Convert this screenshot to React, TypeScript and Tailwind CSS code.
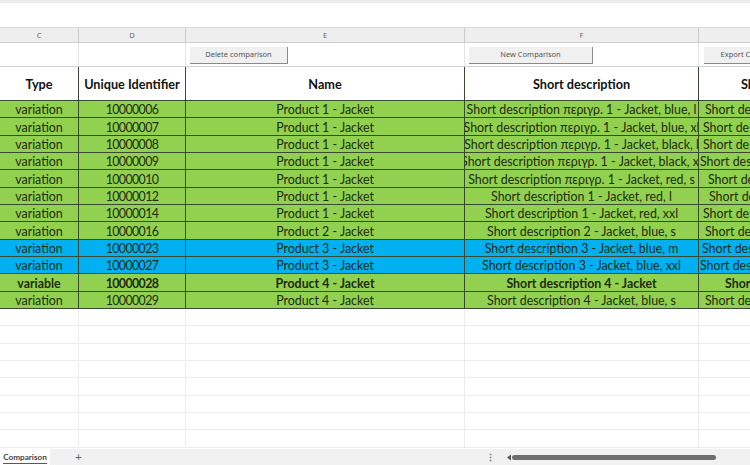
const rows: [string, string, string, string, string, string, string][] = [
  ["variation", "10000006", "Product 1 - Jacket", "Short description περιγρ. 1 - Jacket, blue, l", "Short description 1", "g", "pl-[6px]"],
  ["variation", "10000007", "Product 1 - Jacket", "Short description περιγρ. 1 - Jacket, blue, xl", "Short description 1", "g", "pl-[4px]"],
  ["variation", "10000008", "Product 1 - Jacket", "Short description περιγρ. 1 - Jacket, black, l", "Short description 1", "g", "pl-[4px]"],
  ["variation", "10000009", "Product 1 - Jacket", "Short description περιγρ. 1 - Jacket, black, xl", "Short description 1", "g", "pl-[1px]"],
  ["variation", "10000010", "Product 1 - Jacket", "Short description περιγρ. 1 - Jacket, red, s", "Short description 1", "g", "pl-[9px]"],
  ["variation", "10000012", "Product 1 - Jacket", "Short description 1 - Jacket, red, l", "Short description 1", "g", "pl-[10px]"],
  ["variation", "10000014", "Product 1 - Jacket", "Short description 1 - Jacket, red, xxl", "Short description 1", "g", "pl-[4px]"],
  ["variation", "10000016", "Product 2 - Jacket", "Short description 2 - Jacket, blue, s", "Short description 2", "g", "pl-[6px]"],
  ["variation", "10000023", "Product 3 - Jacket", "Short description 3 - Jacket, blue, m", "Short description 3", "b", "pl-[3px]"],
  ["variation", "10000027", "Product 3 - Jacket", "Short description 3 - Jacket, blue, xxl", "Short description 3", "b", "pl-[1px]"],
  ["variable", "10000028", "Product 4 - Jacket", "Short description 4 - Jacket", "Short description 4", "v", "pl-[26px]"],
  ["variation", "10000029", "Product 4 - Jacket", "Short description 4 - Jacket, blue, s", "Short description 4", "g", "pl-[6px]"],
];

const cols = "grid grid-cols-[79px_107px_279px_234px_235px]";
const font = { fontFamily: "Lato, 'Noto Sans', sans-serif" };
const uiFont = { fontFamily: "'Noto Sans', sans-serif" };

function Cell({ children, cls = "" }: { children?: React.ReactNode; cls?: string }) {
  return <div className={`flex items-center justify-center overflow-hidden whitespace-nowrap pt-[3px] border-r border-b border-[#3a4a32] ${cls}`}>{children}</div>;
}

function Btn({ label, cls }: { label: string; cls: string }) {
  return (
    <button style={uiFont} className={`h-[17px] mt-[1px] bg-[#f0f0f0] border-r border-b border-[#8a8a8a] text-[7.5px] text-[#555] whitespace-nowrap overflow-hidden ${cls}`}>
      {label}
    </button>
  );
}

function Head({ children }: { children?: React.ReactNode }) {
  return <div style={uiFont} className="flex items-center justify-center pt-[2px] border-r border-[#c9c9c9] text-[7.5px] text-[#666]">{children}</div>;
}

function Spare() {
  return (
    <div className={`${cols} h-[17.33px]`}>
      {[0, 1, 2, 3, 4].map((i) => (
        <div key={i} className="border-r border-b border-[#ececec]" />
      ))}
    </div>
  );
}

export default function App() {
  return (
    <div className="w-[750px] h-[465px] overflow-hidden bg-white flex flex-col" style={font}>
      <div className="h-[3px] bg-[#ececec] shrink-0" />
      <div className="h-[25px] bg-white border-b border-[#dcdcdc] shrink-0" />
      <div className={`${cols} h-[15px] bg-[#eeeeee] border-b border-[#cfcfcf] shrink-0`}>
        <Head>C</Head>
        <Head>D</Head>
        <Head>E</Head>
        <Head>F</Head>
        <Head />
      </div>
      <div className={`${cols} h-[24px] border-b border-[#d0d0d0] shrink-0`}>
        <div className="border-r border-[#e4e4e4]" />
        <div className="border-r border-[#e4e4e4]" />
        <div className="border-r border-[#e4e4e4] flex items-center pl-[4px]">
          <Btn label="Delete comparison" cls="w-[98px]" />
        </div>
        <div className="border-r border-[#e4e4e4] flex items-center pl-[4px]">
          <Btn label="New Comparison" cls="w-[124px]" />
        </div>
        <div className="flex items-center pl-[5px]">
          <Btn label="Export Comparison" cls="w-[102px]" />
        </div>
      </div>
      <div className={`${cols} h-[34px] shrink-0 font-bold text-[12.7px] text-[#111]`}>
        <Cell>Type</Cell>
        <Cell>Unique Identifier</Cell>
        <Cell>Name</Cell>
        <Cell>Short description</Cell>
        <Cell cls="!justify-start pl-[42px]">Short description</Cell>
      </div>
      <div className="shrink-0 text-[12.4px] text-[#1d2b12]">
        {rows.map((r) => {
          const bg = r[5] === "b" ? "bg-[#00b0f0]" : "bg-[#92d050]";
          const bold = r[5] === "v" ? "font-bold" : "";
          return (
            <div key={r[1]} className={`${cols} h-[17.33px] ${bg} ${bold}`}>
              <Cell>{r[0]}</Cell>
              <Cell cls="tracking-[-0.6px]">{r[1]}</Cell>
              <Cell>{r[2]}</Cell>
              <Cell>{r[3]}</Cell>
              <Cell cls={`!justify-start ${r[6]}`}>{r[4]}</Cell>
            </div>
          );
        })}
      </div>
      <div className="flex-1 overflow-hidden min-h-0">
        {Array.from({ length: 8 }).map((_, i) => (
          <Spare key={i} />
        ))}
      </div>
      <div className="h-[16px] shrink-0 flex items-center bg-[#f1f1f1] relative">
        <div className="h-full w-[50px] bg-white flex items-center justify-center pt-[1px]">
          <span className="text-[8.2px] font-bold text-[#444] border-b border-[#1e7b45] leading-[11px]">Comparison</span>
        </div>
        <span className="ml-[25px] text-[12px] leading-none text-[#666]">+</span>
        <span className="ml-[404px] text-[9px] leading-none text-[#666] font-bold">⋮</span>
        <svg className="ml-[11px]" width="6" height="7" viewBox="0 0 6 7"><path d="M5 0.5V6.5L1 3.5Z" fill="#555" /></svg>
        <div className="h-[5px] w-[204px] rounded-full bg-[#6e6e6e]" />
      </div>
    </div>
  );
}
